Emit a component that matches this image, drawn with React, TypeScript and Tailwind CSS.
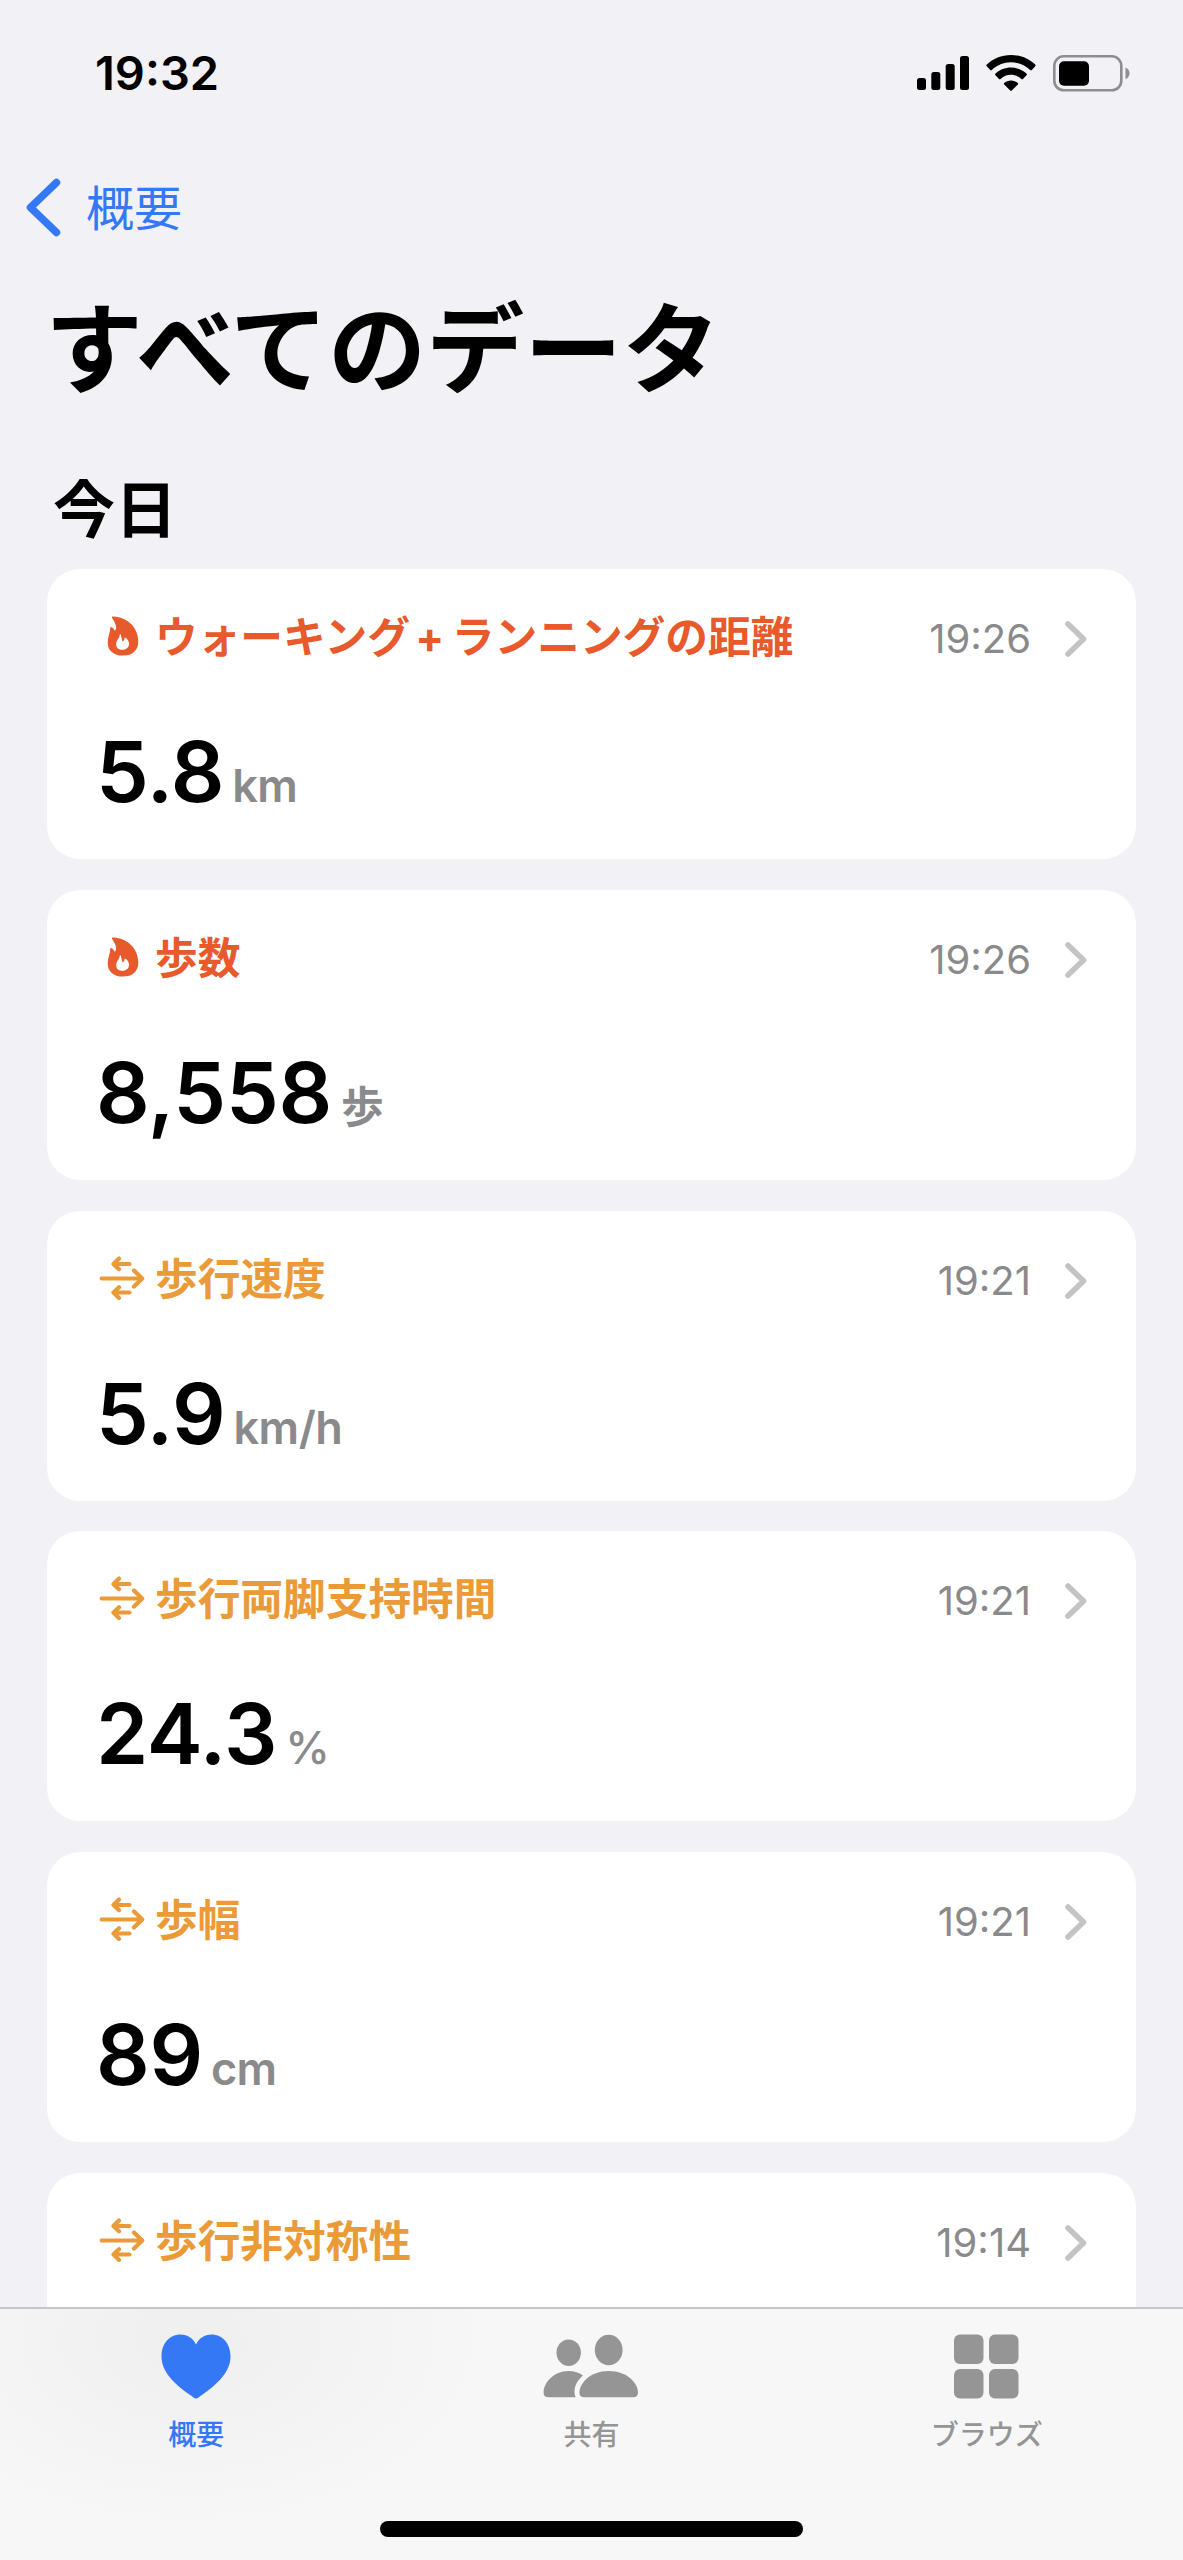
import { ReactNode } from 'react'
import { clsx } from 'clsx'

type Category = 'activity' | 'mobility'

interface Metric {
  category: Category
  title: ReactNode
  time: string
  value?: string
  unit?: string
  cjkUnit?: boolean
}

const metrics: Metric[] = [
  {
    category: 'activity',
    title: (
      <>
        ウォーキング
        <span className="inline-block w-[42px] pr-[2px] text-center font-['Inter',sans-serif] leading-none">+</span>
        ランニングの距離
      </>
    ),
    time: '19:26',
    value: '5.8',
    unit: 'km',
  },
  { category: 'activity', title: '歩数', time: '19:26', value: '8,558', unit: '歩', cjkUnit: true },
  { category: 'mobility', title: '歩行速度', time: '19:21', value: '5.9', unit: 'km/h' },
  { category: 'mobility', title: '歩行両脚支持時間', time: '19:21', value: '24.3', unit: '%' },
  { category: 'mobility', title: '歩幅', time: '19:21', value: '89', unit: 'cm' },
  { category: 'mobility', title: '歩行非対称性', time: '19:14' },
]

function SignalIcon() {
  return (
    <svg width="52" height="34" viewBox="0 0 52 34" fill="currentColor">
      <rect x="0" y="22" width="9" height="12" rx="2.5" />
      <rect x="14.3" y="16" width="9" height="18" rx="2.5" />
      <rect x="28.7" y="8" width="9" height="26" rx="2.5" />
      <rect x="43" y="0" width="9" height="34" rx="2.5" />
    </svg>
  )
}

function WifiIcon() {
  return (
    <svg width="50" height="36" viewBox="0 0 50 36" fill="currentColor">
      <path d="M25 0C34.5 0 43 3.6 49.2 9.6Q50 10.4 49.2 11.2L45.8 15Q45 15.8 44.2 15C39 10.2 32.5 7.3 25 7.3S11 10.2 5.8 15Q5 15.8 4.2 15L.8 11.2Q0 10.4.8 9.6C7 3.6 15.5 0 25 0Z" />
      <path d="M25 12.6C31 12.6 36.4 14.9 40.5 18.6Q41.3 19.4 40.5 20.2L37 23.9Q36.2 24.6 35.4 23.9C32.6 21.4 29 19.8 25 19.8S17.4 21.4 14.6 23.9Q13.8 24.6 13 23.9L9.5 20.2Q8.7 19.4 9.5 18.6C13.6 14.9 19 12.6 25 12.6Z" />
      <path d="M25 25.4C27.6 25.4 30 26.4 31.8 28Q32.6 28.8 31.8 29.6L25.8 35.6Q25 36.4 24.2 35.6L18.2 29.6Q17.4 28.8 18.2 28C20 26.4 22.4 25.4 25 25.4Z" />
    </svg>
  )
}

function BatteryIcon() {
  return (
    <svg width="77" height="37" viewBox="0 0 77 37">
      <rect x="1.3" y="1.3" width="67" height="34" rx="9.5" fill="none" stroke="#8e8e91" strokeWidth="2.6" />
      <rect x="6" y="6.3" width="30" height="24.4" rx="5" fill="#000" />
      <path d="M72.5 12.5C75 13.4 76.5 15.6 76.5 18.3S75 23.2 72.5 24.2Z" fill="#8e8e91" />
    </svg>
  )
}

function FlameIcon() {
  return (
    <svg width="32" height="40" viewBox="0 0 32 40">
      <path
        fill="currentColor"
        d="M5 1.8C4.5.8 5.4.3 6.6.4C20 1.1 31.3 11 31.3 25.5C31.3 34.3 25.6 39.6 16 39.6C6.5 39.6.7 34.4.7 26.7C.7 21 3 17.5 3.2 12.2C3.3 10.8 4.2 10.7 5.2 11.6C6.4 12.7 7.1 13.7 7.7 14.8C8.6 14.2 9.1 13.1 9.1 11.6C9.1 7.800 6.6 4.8 5 1.8Z"
      />
      {/* inner flame */}
      <path
        fill="#fff"
        d="M12.7 18.6C12.5 22.9 9.2 23.8 9.2 28.4C9.2 31.8 11.7 33.8 15.5 33.8C19.5 33.8 22 31.4 22 27.8C22 24.6 20 22.2 17.6 21.6C17.7 23.2 17 24.6 15.7 25.5C14.6 24.2 14.8 21 13.6 18.200Q12.8 17.6 12.7 18.6Z"
      />
    </svg>
  )
}

function MobilityIcon() {
  return (
    <svg
      width="46"
      height="44"
      viewBox="0 0 46 44"
      fill="none"
      stroke="currentColor"
      strokeWidth="4.2"
      strokeLinecap="round"
      strokeLinejoin="round"
    >
      <path d="M2.6 22.5H43M35 14.5L43.2 22.5L35 30.5" />
      <path d="M30.5 8H14.5M20 2.6L14.5 8L20 13.3" />
      <path d="M30.5 36.5H14.5M20 31.2L14.5 36.5L20 41.9" />
    </svg>
  )
}

function MetricCard({ category, title, time, value, unit, cjkUnit }: Metric) {
  return (
    <article className="h-[290px] shrink-0 rounded-[33px] bg-white pt-[42px] pr-[48px] pl-[52px]">
      <div
        className={clsx(
          'flex h-[50px] items-center',
          category === 'activity' ? 'text-[#e8592b]' : 'text-[#eb9a38]'
        )}
      >
        <span className="flex w-[56px] shrink-0 items-center">
          {category === 'activity' ? (
            <span className="pl-2">
              <FlameIcon />
            </span>
          ) : (
            <MobilityIcon />
          )}
        </span>
        <h3 className="mb-1 text-[42.7px] leading-[50px] font-bold whitespace-nowrap">{title}</h3>
        <span className="mt-1.5 ml-auto font-['Inter',sans-serif] text-[40px] text-[#8a8a8d]">{time}</span>
        <svg
          className="mt-1.5 ml-[33px]"
          width="24"
          height="38"
          viewBox="0 0 24 38"
          fill="none"
          stroke="#c4c4c6"
          strokeWidth="5.6"
          strokeLinecap="round"
          strokeLinejoin="round"
        >
          <path d="M4 4L19.5 19L4 34" />
        </svg>
      </div>
      {value && (
        <div className="mt-[61px] -ml-[3px] flex items-baseline font-['Inter',sans-serif] leading-[100px]">
          <span className="text-[84px] font-semibold tracking-[-0.3px] text-black">{value}</span>
          <span
            className={clsx(
              'text-[#8a8a8d]',
              cjkUnit && "ml-[9px] font-['Noto_Sans_CJK_JP',sans-serif] text-[42.7px] leading-none font-bold",
              !cjkUnit && 'ml-2 text-[45px] tracking-[-0.5px]',
              !cjkUnit && (unit === '%' ? 'font-medium' : 'font-semibold')
            )}
          >
            {unit}
          </span>
        </div>
      )}
    </article>
  )
}

function HeartIcon() {
  return (
    <svg width="70" height="65" viewBox="0 0 70 65" fill="currentColor">
      <path d="M35 64.5C33.5 64.5 31.5 62.7 29.5 61.3C12 49.2.5 37 .5 22.5C.5 8.8 9.3.5 19.5.5C26.5.5 32 4.2 35 10.5C38 4.2 43.5.5 50.5.5C60.7.5 69.5 8.8 69.5 22.5C69.5 37 58 49.2 40.5 61.3C38.5 62.7 36.5 64.5 35 64.5Z" />
    </svg>
  )
}

function PeopleIcon() {
  return (
    <svg width="96" height="65" viewBox="0 0 96 65" fill="currentColor">
      <ellipse cx="25.7" cy="18.7" rx="12.2" ry="13.3" />
      <ellipse cx="65.7" cy="16" rx="13.9" ry="15.2" />
      <path d="M25.7 37C31.3 37 36 38.5 40 41.5C34.5 46 31.2 52 31.5 58.5Q31.6 61 32.6 63.3H5.5Q.6 63.3.6 58.5C.6 49 10.5 37 25.7 37Z" />
      <path d="M65.7 37C85 37 95 50 95 58.5Q95 63.3 90.2 63.3H41.2Q36.4 63.3 36.4 58.5C36.4 50 46.5 37 65.7 37Z" />
    </svg>
  )
}

function GridIcon() {
  return (
    <svg width="65" height="65" viewBox="0 0 65 65" fill="currentColor">
      <rect x="0" y="0.5" width="29.5" height="29.5" rx="6" />
      <rect x="35" y="0.5" width="29.5" height="29.5" rx="6" />
      <rect x="0" y="35" width="29.5" height="29.5" rx="6" />
      <rect x="35" y="35" width="29.5" height="29.5" rx="6" />
    </svg>
  )
}

const tabs = [
  { label: '概要', icon: <HeartIcon />, active: true },
  { label: '共有', icon: <PeopleIcon />, active: false },
  { label: 'ブラウズ', icon: <GridIcon />, active: false },
]

export default function App() {
  return (
    <div
      lang="ja"
      className="flex h-[2560px] w-[1183px] flex-col overflow-hidden bg-[#f1f1f6] font-['Noto_Sans_CJK_JP',sans-serif] text-black"
    >
      <header className="flex h-[146px] shrink-0 items-center justify-between pr-[53px] pl-[95px]">
        <span className="font-['Inter',sans-serif] text-[47px] font-semibold">19:32</span>
        <div className="flex items-center gap-[17px]">
          <SignalIcon />
          <WifiIcon />
          <BatteryIcon />
        </div>
      </header>

      <nav className="flex h-[124px] shrink-0 items-center pl-[24px] text-[#3478f6]">
        <svg
          width="40"
          height="60"
          viewBox="0 0 40 60"
          fill="none"
          stroke="currentColor"
          strokeWidth="7.5"
          strokeLinecap="round"
          strokeLinejoin="round"
        >
          <path d="M32.5 4.5L6.5 29.5L32.5 54.5" />
        </svg>
        <a className="mb-1.5 ml-[22px] text-[48px] leading-[60px] font-normal">概要</a>
      </nav>

      <h1 className="h-[150px] shrink-0 pl-[45px] text-[98px] leading-[144px] font-bold">すべてのデータ</h1>

      <main className="flex min-h-0 flex-1 flex-col overflow-hidden px-[47px]">
        <h2 className="mt-[36px] h-[113px] shrink-0 pl-[6px] text-[62px] leading-[100px] font-bold">今日</h2>
        <div className="flex flex-col gap-[30.8px]">
          {metrics.map((metric, i) => (
            <MetricCard key={i} {...metric} />
          ))}
        </div>
      </main>

      <footer className="flex h-[253px] shrink-0 flex-col items-center border-t-2 border-[#c6c6c8] bg-[#f7f7f8] bg-[radial-gradient(ellipse_300px_190px_at_190px_30px,#efeff0,#f7f7f8)]">
        <div className="flex w-[1186px] shrink-0">
          {tabs.map(({ label, icon, active }) => (
            <button
              key={label}
              className={clsx(
                'flex flex-1 flex-col items-center pt-[25px]',
                active ? 'text-[#3478f6]' : 'text-[#959595]'
              )}
            >
              {icon}
              <span className="mt-[13px] text-[28px] leading-[42px] font-medium">{label}</span>
            </button>
          ))}
        </div>
        <div className="mt-auto mb-[23px] h-4 w-[423px] rounded-full bg-black" />
      </footer>
    </div>
  )
}
